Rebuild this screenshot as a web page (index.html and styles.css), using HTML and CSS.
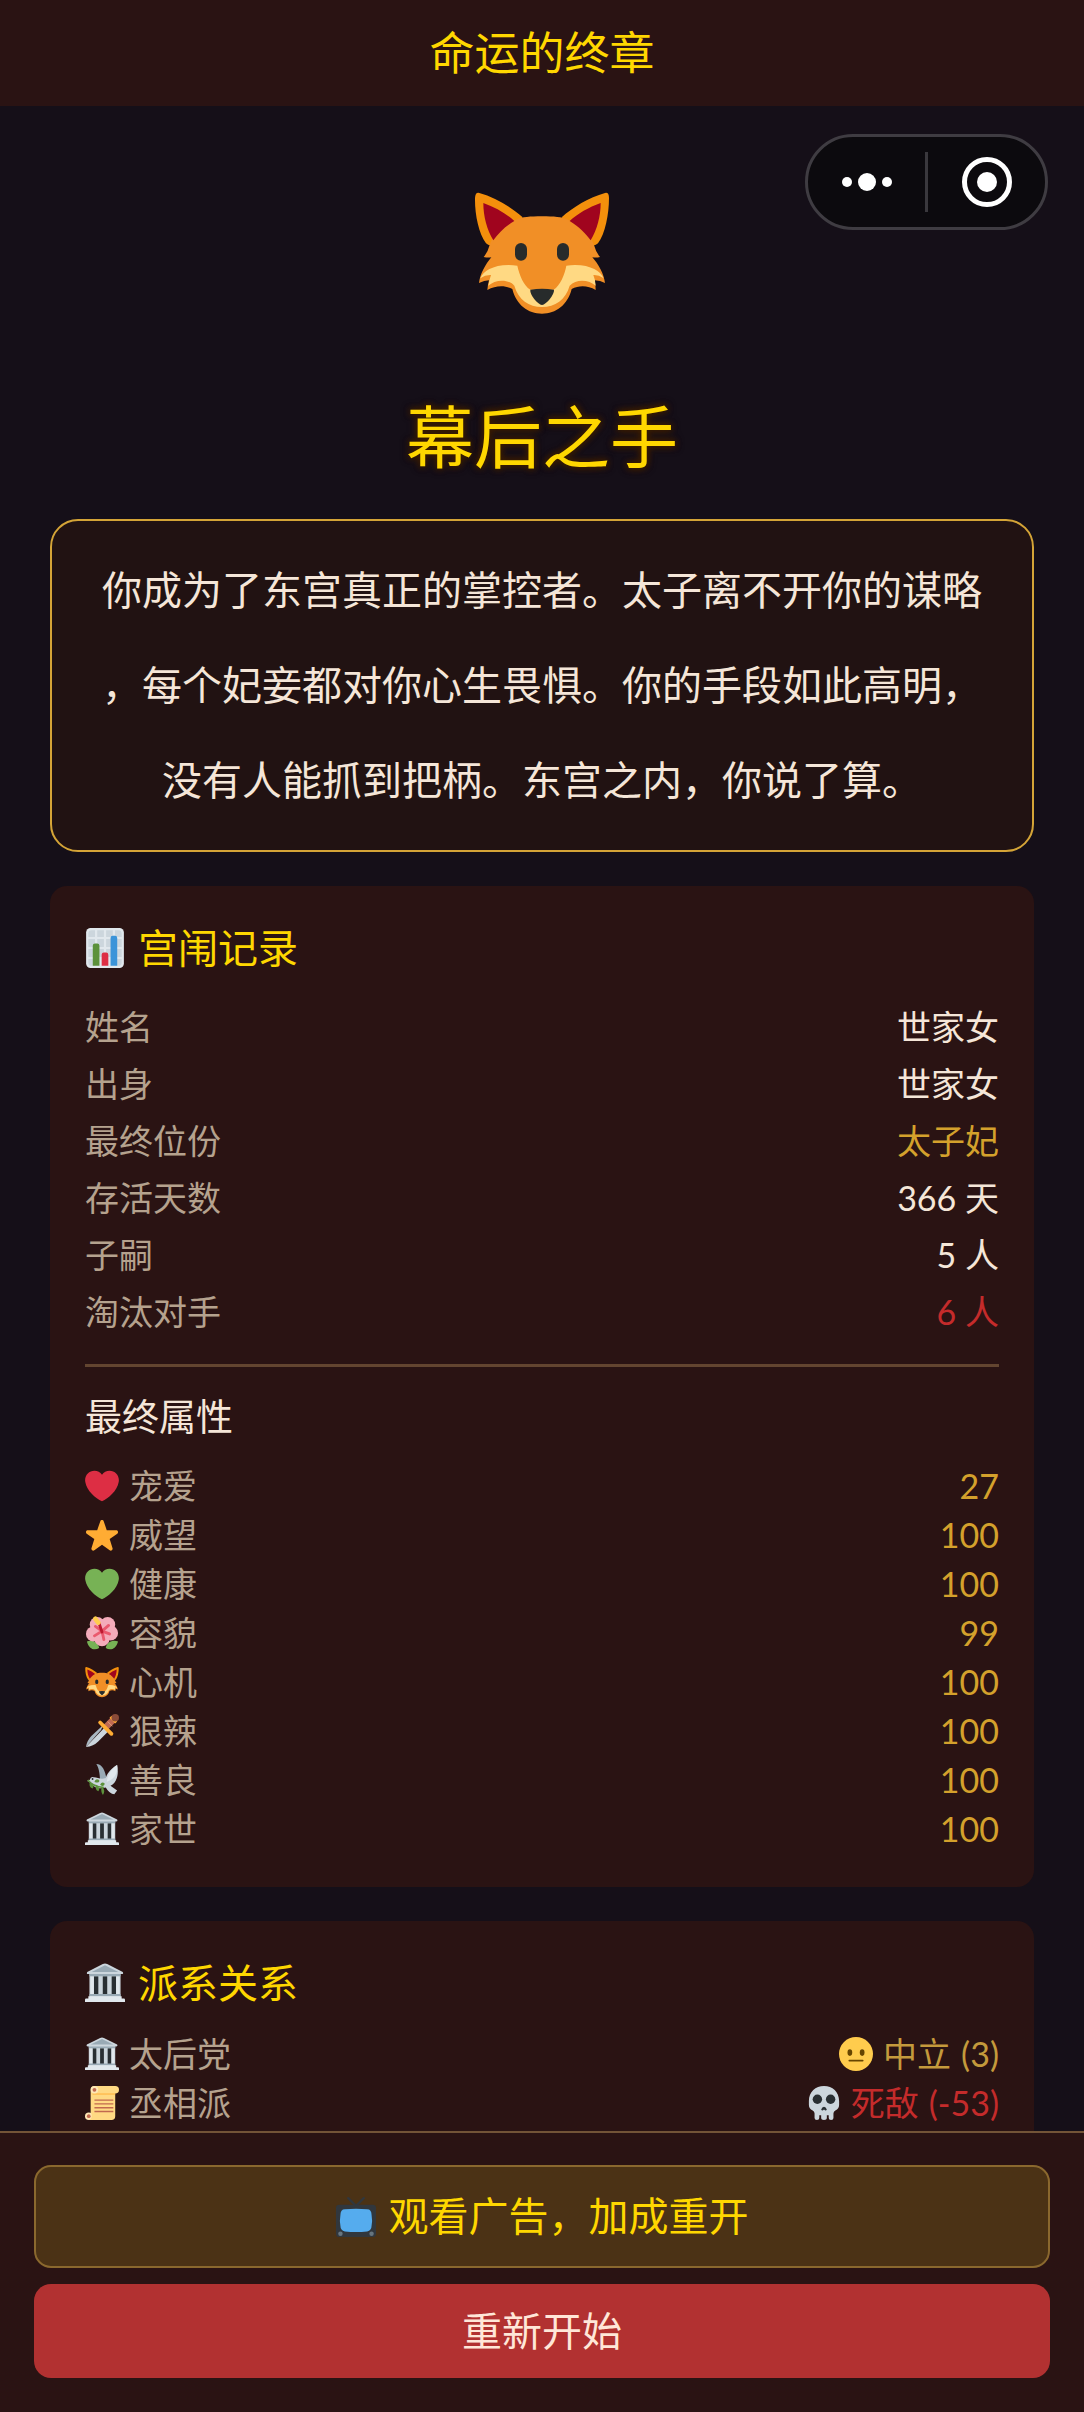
FILE: index.html
```html
<!DOCTYPE html>
<html lang="zh-CN">
  <head>
    <meta charset="UTF-8" />
    <meta name="viewport" content="width=device-width, initial-scale=1" />
    <title>命运的终章</title>
    <link rel="stylesheet" href="styles.css">
  </head>
  <body>
    <!-- Icon set -->
    <svg class="icon-set" aria-hidden="true">
      <symbol id="fox" viewBox="102 45 408 408">
        <path fill="#f4900c" d="M118 69Q106 66 105 84C104 132 116 191 138 220Q145 227 154 226L248 142C215 112 165 82 118 69zM495 69Q507 66 507 84C507 132 496 191 474 220Q467 227 458 226L365 142C398 112 447 82 495 69z"/>
        <path fill="#f18f26" d="M306 139C270 139 246 141 231 148C189 165 160 193 149 225Q143 248 131 261Q144 264 154 262C137 282 120 312 117 339Q133 331 147 331Q143 346 142 360C168 346 195 346 217 357C229 405 264 431 306 431S383 405 395 357C417 346 443 346 467 360Q467 346 464 331Q481 331 495 339C492 312 475 282 457 262Q470 264 480 261Q468 248 462 225C451 193 423 165 381 148C366 141 342 139 306 139z"/>
        <path fill="#a0041e" d="M130 99C166 112 199 131 223 153C195 170 175 190 160 211C141 179 130 140 130 99zM482 99C446 112 413 131 389 153C417 170 437 190 452 211C471 179 482 140 482 99z"/>
        <path fill="#ffd983" d="M121 325C130 301 168 279 232 287C238 314 251 347 271 359H341C360 347 374 314 379 287C443 279 481 301 491 325Q476 314 460 315Q466 329 467 347C448 329 409 325 389 347C377 389 345 411 306 411S235 389 223 347C203 325 164 329 145 347Q148 329 153 315Q136 314 121 325z"/>
        <path fill="#272b2b" d="M271 359Q306 354 342 359C344 373 319 403 306 405C293 403 268 373 271 359z"/>
        <rect x="225" y="219" width="36" height="53" rx="18" fill="#272b2b"/>
        <rect x="351" y="219" width="36" height="53" rx="18" fill="#272b2b"/>
      </symbol>
      <symbol id="chart" viewBox="0 0 36 36">
        <rect x="1" width="34" height="36" rx="4" fill="#e1e8ed"/>
        <path fill="#ccd6dd" d="M3 5q0-3 3-3h3v6H3zM11 2h6v6h-6zM19 2h6v6h-6zM27 2h3q3 0 3 3v3h-6zM3 10h6v7H3zM11 10h6v7h-6zM19 10h6v7h-6zM27 10h6v7h-6zM3 19h6v7H3zM11 19h6v7h-6zM19 19h6v7h-6zM27 19h6v7h-6zM3 28h6v6H6q-3 0-3-3zM27 28h6v3q0 3-3 3h-3z"/>
        <path fill="#5c913b" d="M13 34H7V16q0-2 2-2h2q2 0 2 2z"/>
        <path fill="#dd2e44" d="M21 34h-6V24q0-2 2-2h2q2 0 2 2z"/>
        <path fill="#3b94d9" d="M29 34h-6V9q0-2 2-2h2q2 0 2 2z"/>
      </symbol>
      <symbol id="heart" viewBox="0 0 36 36">
        <path fill="currentColor" d="M35.885 11.833c0-5.45-4.418-9.868-9.867-9.868-3.308 0-6.227 1.633-8.018 4.129-1.791-2.496-4.71-4.129-8.017-4.129-5.45 0-9.868 4.417-9.868 9.868 0 .772.098 1.52.266 2.241C1.751 22.587 11.216 31.568 18 34.034c6.783-2.466 16.249-11.447 17.617-19.959.17-.721.268-1.469.268-2.242z"/>
      </symbol>
      <symbol id="star" viewBox="0 0 36 36">
        <path fill="#ffac33" d="M27.287 34.627c-.404 0-.806-.124-1.152-.371L18 28.422l-8.135 5.834c-.343.247-.746.371-1.148.371-.408 0-.816-.127-1.162-.38-.69-.5-.98-1.391-.72-2.201l3.034-9.792-8.062-5.681c-.685-.505-.97-1.393-.708-2.203.264-.809 1.016-1.357 1.866-1.363l9.947-.009 3.209-9.418c.28-.798 1.036-1.334 1.879-1.334s1.6.536 1.88 1.334l3.139 9.418 10.016.009c.85.006 1.603.554 1.866 1.363.264.81-.022 1.698-.708 2.203l-8.062 5.681 3.034 9.792c.26.81-.029 1.701-.72 2.201-.346.253-.754.38-1.158.38z"/>
      </symbol>
      <symbol id="flower" viewBox="0 0 36 36">
        <path fill="#77b255" d="M2 27c5-2 12 0 13 7-5 3-11 1-13-7zM35 27c-5-2-12 0-13 7 5 3 11 1 13-7z"/>
        <g fill="#f4abba">
          <circle cx="13" cy="9" r="8"/>
          <circle cx="24" cy="9" r="8"/>
          <circle cx="27" cy="18" r="8"/>
          <circle cx="9" cy="19" r="8"/>
          <circle cx="18" cy="24" r="8"/>
          <circle cx="18" cy="16" r="9"/>
        </g>
        <path fill="none" stroke="#ea596e" stroke-width="3" stroke-linecap="round" d="M18 16l7-6M18 16l8 3M18 16l-8 5M18 16l2 9M18 16l-7-5"/>
        <path fill="none" stroke="#be1931" stroke-width="3" stroke-linecap="round" d="M18 17l-3-9"/>
        <path fill="none" stroke="#ffcc4d" stroke-width="5" stroke-linecap="round" d="M14 7l-3-4"/>
      </symbol>
      <symbol id="dagger" viewBox="0 0 36 36">
        <path fill="#aab8c2" d="M19 12L7 23Q2 28 1 35L17 17z"/>
        <path fill="#ccd6dd" d="M25 18L14 29Q9 34 1 35L21 14z"/>
        <path fill="none" stroke="#bf6952" stroke-width="7" d="M22 14l8-8"/>
        <path fill="none" stroke="#ffac33" stroke-width="4" stroke-linecap="round" d="M16 9l12 12"/>
        <path fill="none" stroke="#ffac33" stroke-width="3" d="M27 3l6 6"/>
        <circle cx="32" cy="4" r="4" fill="#8a4b38"/>
        <path stroke="#d99e82" stroke-width="1" d="M24 8l5 5"/>
      </symbol>
      <symbol id="dove" viewBox="0 0 36 36">
        <path fill="#99aab5" d="M12 1C18 1 22 8 23 19L16 23C16 12 15 6 12 1z"/>
        <path fill="#ccd6dd" d="M34 2C29 5 24 9 22 16C16 18 14 15 9 15Q6 14 5 18L2 19L6 20C8 25 13 28 22 26Q26 33 31 33L34 29L27 24C34 21 36 11 34 2z"/>
        <path fill="#e1e8ed" d="M34 2C28 6 24 12 23 20C31 17 35 11 34 2z"/>
        <path fill="none" stroke="#5c913b" stroke-width="1.5" d="M3 18q5 7 17 8"/>
        <path fill="#5c913b" d="M5 20q-1 6 3 7 3-3-3-7zM10 20q1-4 5-2 1 4-5 2zM12 23q-2 5 2 7 3-3-2-7zM18 25q-2 5 1 9 3-5-1-9zM16 23q2-4 5-1-1 4-5 1z"/>
        <circle cx="8" cy="17" r="1" fill="#292f33"/>
      </symbol>
      <symbol id="temple" viewBox="0 0 36 36">
        <path fill="#ccd6dd" d="M4 10h28v21H4z"/>
        <path fill="#292f33" d="M8 12h4v17H8zM16 12h4v17h-4zM24 12h4v17h-4z"/>
        <path fill="#e1e8ed" d="M5 12h3v17H5zM28 12h3v17h-3z"/>
        <path fill="#99aab5" d="M4 9h28v3H4zM4 28h28v2H4z"/>
        <path fill="#ccd6dd" d="M2 8L16 1q2-1 4 0L34 8q1 2-1 2H3Q1 10 2 8z"/>
        <path fill="#99aab5" d="M6 8l12-6 12 6z"/>
        <path fill="#e1e8ed" d="M3 30h30v2h2q1 0 1 1v2H0v-2q0-1 1-1h2z"/>
      </symbol>
      <symbol id="scroll" viewBox="0 0 36 36">
        <path fill="#ffd983" d="M10 0h22q4 0 4 4t-4 4v24q0 4-4 4H4v-4h2V4q0-4 4-4z"/>
        <path fill="#ffac33" d="M8 8h24v1H8z"/>
        <path fill="#ffe8b6" d="M4 28a4 4 0 1 0 4 4q0-4-4-4z"/>
        <circle cx="10" cy="4" r="4" fill="#ffe8b6"/>
        <path fill="#ffd983" d="M7 32q0 3-3 4h14V28H7z"/>
        <circle cx="10" cy="4" r="2" fill="#c1694f"/>
        <circle cx="4" cy="32" r="2" fill="#c1694f"/>
        <path stroke="#c1694f" stroke-width="1.4" d="M10 15h20M10 19h20M10 23h20M10 27h20"/>
      </symbol>
      <symbol id="neutral" viewBox="0 0 36 36">
        <circle cx="18" cy="18" r="18" fill="#ffcc4d"/>
        <ellipse cx="11.500" cy="16.500" rx="2.500" ry="3.500" fill="#664500"/>
        <ellipse cx="24.500" cy="16.500" rx="2.500" ry="3.500" fill="#664500"/>
        <rect x="10" y="24" width="16" height="2" rx="1" fill="#664500"/>
      </symbol>
      <symbol id="skull" viewBox="0 0 36 36">
        <path fill="#ccd6dd" d="M34 16C34 6 27 0 18 0S2 6 2 16v4q0 4 4 6q2 1 2 3v5q0 2 2.500 2t2.500-2v-3h2v3q0 2 3 2t3-2v-3h2v3q0 2 2.500 2t2.500-2v-5q0-2 2-3q4-2 4-6z"/>
        <circle cx="11" cy="14" r="5" fill="#292f33"/>
        <circle cx="25" cy="14" r="5" fill="#292f33"/>
        <path fill="#292f33" d="M18 22q2 0 3 3-1 2-3 0-2 2-3 0 1-3 3-3z"/>
      </symbol>
      <symbol id="tv" viewBox="0 0 36 36">
        <path fill="none" stroke="#31373d" stroke-width="2" stroke-linecap="round" d="M11 1l7 7 7-7"/>
        <rect y="7" width="36" height="29" rx="3" fill="#31373d"/>
        <path fill="#55acee" d="M8 11q10-1 20 0 4 0 4 5 1 6 0 10 0 4-4 5-10 1-20 0-4-1-4-5-1-4 0-10 0-5 4-5z"/>
        <circle cx="4" cy="33" r="2" fill="#66757f"/>
        <circle cx="32" cy="33" r="2" fill="#66757f"/>
      </symbol>
    </svg>

    <header class="navbar">命运的终章</header>

    <!-- Mini program capsule, floats over the page -->
    <div class="capsule">
      <button class="capsule-btn" type="button" aria-label="更多">
        <svg viewBox="0 0 60 60" fill="#fff">
          <circle cx="10" cy="30" r="5"/>
          <circle cx="30" cy="30" r="9"/>
          <circle cx="50" cy="30" r="5"/>
        </svg>
      </button>
      <button class="capsule-btn" type="button" aria-label="关闭">
        <svg viewBox="0 0 60 60">
          <circle cx="30" cy="30" r="22.500" fill="none" stroke="#fff" stroke-width="5"/>
          <circle cx="30" cy="30" r="10" fill="#fff"/>
        </svg>
      </button>
    </div>

    <main class="content">
      <svg class="hero-icon"><use href="#fox"/></svg>
      <h1 class="hero-title">幕后之手</h1>
      <p class="story">你成为了东宫真正的掌控者。太子离不开你的谋略，每个妃妾都对你心生畏惧。你的手段如此高明，没有人能抓到把柄。东宫之内，你说了算。</p>

      <section class="card">
        <h2 class="card-title"><svg class="icon"><use href="#chart"/></svg>宫闱记录</h2>
        <dl class="records">
          <div class="row"><dt>姓名</dt><dd>世家女</dd></div>
          <div class="row"><dt>出身</dt><dd>世家女</dd></div>
          <div class="row"><dt>最终位份</dt><dd class="gold">太子妃</dd></div>
          <div class="row"><dt>存活天数</dt><dd>366 天</dd></div>
          <div class="row"><dt>子嗣</dt><dd>5 人</dd></div>
          <div class="row"><dt>淘汰对手</dt><dd class="red">6 人</dd></div>
        </dl>
        <h3 class="sub-title">最终属性</h3>
        <dl class="stats">
          <div class="row"><dt><svg class="icon heart-red"><use href="#heart"/></svg>宠爱</dt><dd class="gold">27</dd></div>
          <div class="row"><dt><svg class="icon"><use href="#star"/></svg>威望</dt><dd class="gold">100</dd></div>
          <div class="row"><dt><svg class="icon heart-green"><use href="#heart"/></svg>健康</dt><dd class="gold">100</dd></div>
          <div class="row"><dt><svg class="icon"><use href="#flower"/></svg>容貌</dt><dd class="gold">99</dd></div>
          <div class="row"><dt><svg class="icon"><use href="#fox"/></svg>心机</dt><dd class="gold">100</dd></div>
          <div class="row"><dt><svg class="icon"><use href="#dagger"/></svg>狠辣</dt><dd class="gold">100</dd></div>
          <div class="row"><dt><svg class="icon"><use href="#dove"/></svg>善良</dt><dd class="gold">100</dd></div>
          <div class="row"><dt><svg class="icon"><use href="#temple"/></svg>家世</dt><dd class="gold">100</dd></div>
        </dl>
      </section>

      <section class="card">
        <h2 class="card-title"><svg class="icon"><use href="#temple"/></svg>派系关系</h2>
        <dl class="stats">
          <div class="row"><dt><svg class="icon"><use href="#temple"/></svg>太后党</dt><dd class="neutral"><svg class="icon"><use href="#neutral"/></svg><span>中立</span> <span>(3)</span></dd></div>
          <div class="row"><dt><svg class="icon"><use href="#scroll"/></svg>丞相派</dt><dd class="red"><svg class="icon"><use href="#skull"/></svg><span>死敌</span> <span>(-53)</span></dd></div>
        </dl>
      </section>
    </main>

    <footer class="actions">
      <button class="btn btn-ad" type="button"><svg class="icon"><use href="#tv"/></svg>观看广告，加成重开</button>
      <button class="btn btn-restart" type="button">重新开始</button>
    </footer>
  </body>
</html>
```

FILE: styles.css
```css
* {
  box-sizing: border-box;
  margin: 0;
  padding: 0;
}
body {
  display: flex;
  flex-direction: column;
  height: 100vh;
  background: #150f18;
  color: #f5e6d8;
  font-family: Lato, "Noto Sans CJK SC", sans-serif;
  font-size: 34px;
  text-spacing-trim: space-all;
}
.icon-set {
  display: none;
}
.navbar {
  padding: 20px 0;
  background: #2a1313;
  color: #ffd700;
  font-size: 45px;
  line-height: 66px;
  text-align: center;
}

/* Capsule menu */
.capsule {
  position: absolute;
  top: 134px;
  right: 36px;
  display: flex;
  align-items: center;
  width: 243px;
  height: 96px;
  border: 3px solid #3f3c42;
  border-radius: 48px;
  background: #0c0a0e;
}
.capsule-btn {
  display: flex;
  flex: 1;
  justify-content: center;
  border: none;
  background: none;
}
.capsule-btn + .capsule-btn {
  border-left: 3px solid #3a383d;
}
.capsule-btn svg {
  width: 60px;
  height: 60px;
}

/* Scrolling page content */
.content {
  flex: 1;
  min-height: 0;
  padding: 79px 50px 34px;
  overflow-y: auto;
  scrollbar-width: none;
}
.hero-icon {
  display: block;
  width: 136px;
  height: 136px;
  margin: 0 auto 68px;
}
.hero-title {
  margin-bottom: 34px;
  color: #ffd700;
  font-size: 68px;
  font-weight: 400;
  line-height: 96px;
  text-align: center;
  text-shadow: 0 0 6px #3a1c00, 0 0 6px #3a1c00, 0 0 10px #3a1c00;
}
.story {
  padding: 22px 48px;
  border: 2px solid #d4a437;
  border-radius: 28px;
  background: #211212;
  font-size: 40px;
  line-height: 95px;
  line-break: anywhere;
  text-align: center;
}
.card {
  margin-top: 34px;
  padding: 34px 35px;
  border-radius: 17px;
  background: #2a1313;
}
.card-title {
  display: flex;
  align-items: center;
  gap: 13px;
  margin-bottom: 18px;
  color: #ffd700;
  font-size: 40px;
  font-weight: 400;
  line-height: 56px;
}
.icon {
  flex: none;
  width: 1em;
  height: 1em;
}
.heart-red {
  color: #dd2e44;
}
.heart-green {
  color: #77b255;
}
.row {
  display: flex;
  justify-content: space-between;
  line-height: 49px;
}
.row dt,
.row dd {
  display: flex;
  align-items: center;
  gap: 10px;
}
.row dt {
  color: #b5a28e;
}
.records {
  padding: 4px 0 24px;
  border-bottom: 3px solid #634530;
}
.records .row {
  line-height: 57px;
}
.sub-title {
  margin: 24px 0 18px;
  font-size: 37px;
  font-weight: 400;
  line-height: 52px;
}
.row .gold {
  color: #d4a12c;
}
.row .neutral {
  color: #c49a3c;
}
.row .red {
  color: #c42b2b;
}

/* Bottom buttons */
.actions {
  display: flex;
  flex-direction: column;
  gap: 16px;
  padding: 32px 34px 34px;
  border-top: 2px solid #735437;
  background: #2a1313;
}
.btn {
  display: flex;
  align-items: center;
  justify-content: center;
  gap: 13px;
  padding: 18px;
  border: none;
  border-radius: 17px;
  font-family: inherit;
  font-size: 40px;
  line-height: 58px;
}
.btn-ad {
  padding: 21px 18px;
  border: 2px solid #8a682e;
  background: #4b3215;
  color: #ffd700;
  line-height: 57px;
}
.btn-restart {
  background: #b23131;
  color: #ffe6d8;
}
```
